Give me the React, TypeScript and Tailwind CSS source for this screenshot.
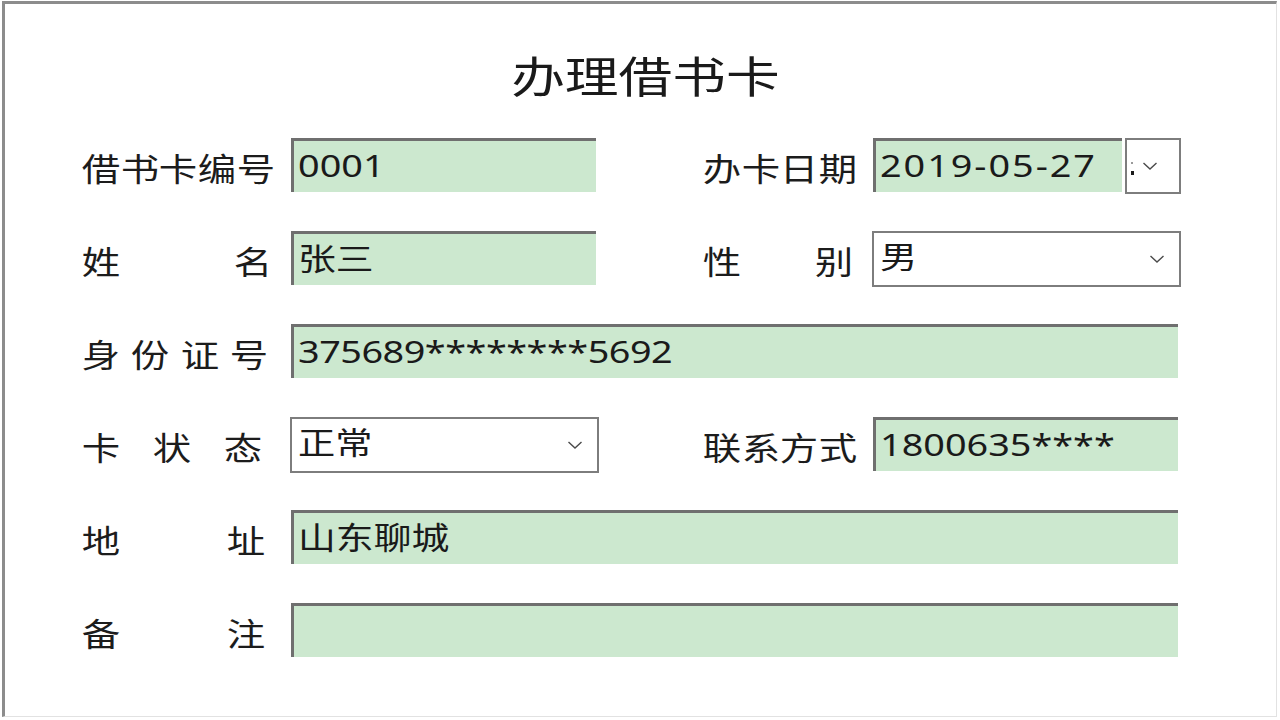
import React from 'react';

const FONT = { fontFamily: '"Noto Sans", "Noto Sans CJK SC", sans-serif' };

/* ── Chevron used by the combo boxes ── */
const Chevron: React.FC = () => (
  <svg width="16" height="10" viewBox="0 0 16 10" className="shrink-0">
    <path d="M1.5 2 L8 8 L14.5 2" fill="none" stroke="#4a4a4a" strokeWidth="1.4" />
  </svg>
);

/* ── Label with its characters spread over a fixed width ── */
const Label: React.FC<{ text: string; width: number; cell: string }> = ({ text, width, cell }) => (
  <div className={`${cell} shrink-0 flex items-center pt-[8px]`}>
    <div className="flex justify-between text-[32px] leading-none text-[#1c1c1c]" style={{ width }}>
      {text.split('').map((c, i) => (
        <span key={i} className="inline-block scale-x-[1.2]">{c}</span>
      ))}
    </div>
  </div>
);

/* ── Sunken green text box ── */
const TextBox: React.FC<{ value?: string; w: string; track?: string }> = ({ value, w, track = '' }) => (
  <div
    className={`${w} h-[54px] shrink-0 bg-[#cce8cf] border-t-[3px] border-l-[3px] border-t-[#6f6f6f] border-l-[#6f6f6f] flex items-center pl-[4px] pb-[3px] text-[31px] text-[#1a1a1a] overflow-hidden whitespace-nowrap`}
  >
    <span className={`inline-block origin-left scale-x-[1.22] ${track}`}>{value}</span>
  </div>
);

/* ── White combo box ── */
const Combo: React.FC<{ value: string; w: string }> = ({ value, w }) => (
  <div
    className={`${w} h-[56px] shrink-0 bg-white border-2 border-[#7d7d7d] flex items-center justify-between pl-[6px] pr-[14px] pb-[6px]`}
  >
    <span className="inline-block origin-left scale-x-[1.2] text-[31px] text-[#1a1a1a]">{value}</span>
    <span className="pt-[6px]"><Chevron /></span>
  </div>
);

export default function App() {
  return (
    <div className="w-[1280px] h-[720px] bg-white overflow-hidden" style={FONT}>
      <div className="ml-[2px] mt-[1px] w-[1275px] h-[716px] border-l-[3px] border-t-[3px] border-r border-b border-l-[#8c8c8c] border-t-[#8c8c8c] border-r-[#e2e2e2] border-b-[#e2e2e2]">
        {/* title */}
        <div className="mt-[45px] mb-[33px] h-[56px] leading-[56px] flex justify-center pl-[10px] text-[43px] text-[#1a1a1a]">
          <span className="inline-block scale-x-[1.25]">办理借书卡</span>
        </div>

        <div className="flex flex-col gap-[39px] pl-[80px]">
          {/* row 1 */}
          <div className="flex h-[54px] items-stretch">
            <Label text="借书卡编号" width={187} cell="w-[206px]" />
            <TextBox value="0001" w="w-[305px]" />
            <div className="w-[110px] shrink-0" />
            <Label text="办卡日期" width={148} cell="w-[167px]" />
            <TextBox value="2019-05-27" w="w-[249px]" track="tracking-[1.6px]" />
            <div className="ml-[3px] w-[56px] h-[56px] shrink-0 border-2 border-[#7d7d7d] bg-white flex items-center pl-[4px] gap-[8px]">
              <span className="flex flex-col gap-[7px] pt-[4px]">
                <span className="w-[2px] h-[2px] bg-[#9a9a9a]" />
                <span className="w-[3px] h-[4px] bg-[#1a1a1a]" />
              </span>
              <Chevron />
            </div>
          </div>

          {/* row 2 */}
          <div className="flex h-[54px] items-stretch">
            <Label text="姓名" width={184} cell="w-[206px]" />
            <TextBox value="张三" w="w-[305px]" />
            <div className="w-[110px] shrink-0" />
            <Label text="性别" width={144} cell="w-[166px]" />
            <Combo value="男" w="w-[309px]" />
          </div>

          {/* row 3 */}
          <div className="flex h-[54px] items-stretch">
            <Label text="身份证号" width={180} cell="w-[206px]" />
            <TextBox value="375689********5692" w="w-[887px]" track="tracking-[-0.4px]" />
          </div>

          {/* row 4 */}
          <div className="flex h-[54px] items-stretch">
            <Label text="卡状态" width={174} cell="w-[205px]" />
            <Combo value="正常" w="w-[309px]" />
            <div className="w-[107px] shrink-0" />
            <Label text="联系方式" width={148} cell="w-[167px]" />
            <TextBox value="1800635****" w="w-[305px]" />
          </div>

          {/* row 5 */}
          <div className="flex h-[54px] items-stretch">
            <Label text="地址" width={177} cell="w-[206px]" />
            <TextBox value="山东聊城" w="w-[887px]" />
          </div>

          {/* row 6 */}
          <div className="flex h-[54px] items-stretch">
            <Label text="备注" width={177} cell="w-[206px]" />
            <TextBox w="w-[887px]" />
          </div>
        </div>
      </div>
    </div>
  );
}
